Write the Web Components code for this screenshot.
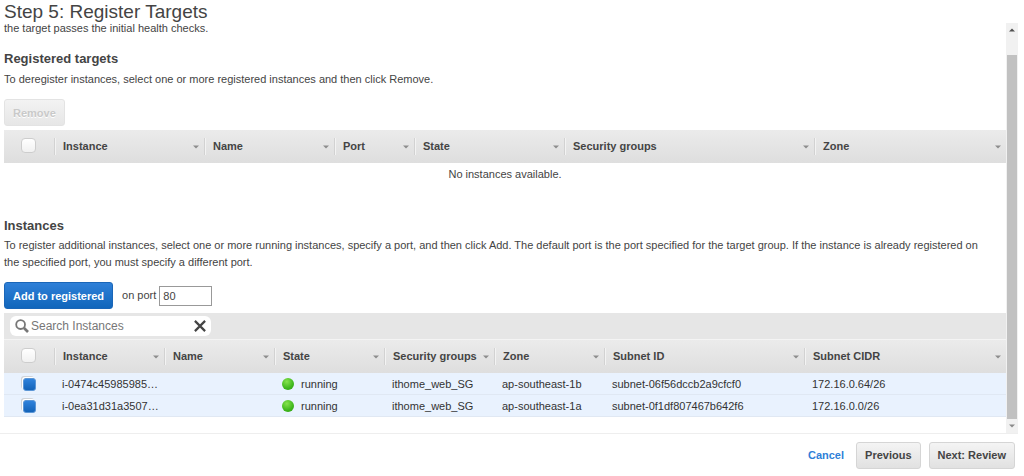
<!DOCTYPE html>
<html lang="en">
<head>
<meta charset="utf-8">
<title>Register Targets</title>
<style>
html, body { margin: 0; height: 100%; }
body { background: #fff; color: #444; font: 11px/17px "Liberation Sans", Arial, sans-serif; overflow: hidden; }
</style>
</head>
<body>
<wizard-page>
  <span slot="title">Step 5: Register Targets</span>
  <registered-targets></registered-targets>
  <available-instances></available-instances>
  <wizard-footer slot="footer"></wizard-footer>
</wizard-page>

<script>
const define = (name, html, setup) => customElements.define(name, class extends HTMLElement {
  constructor() {
    super();
    this.attachShadow({ mode: 'open' }).innerHTML = html;
  }
  connectedCallback() { if (setup) setup(this, this.shadowRoot); }
});

define('scroll-rail', `
<style>
:host { display: flex; flex-direction: column; width: 12px; flex: none; background: #f1f1f1; }
.end { height: 14px; display: flex; align-items: center; justify-content: center; }
.gap { height: 18px; }
.thumb { flex: 1; margin: 0 1px; background: #c1c1c1; }
svg { display: block; }
</style>
<div class="end"><svg width="6" height="4" viewBox="0 0 6 4"><path d="M0 3.5L3 .5l3 3z" fill="#505050"/></svg></div>
<div class="gap"></div>
<div class="thumb"></div>
<div class="end"><svg width="6" height="4" viewBox="0 0 6 4"><path d="M0 .5l3 3 3-3z" fill="#8a8a8a"/></svg></div>
`);

define('wizard-page', `
<style>
:host { display: flex; flex-direction: column; height: 100%; box-sizing: border-box; padding-right: 6px; }
h1 { margin: 0; padding: 2px 0 0 4px; font-size: 19px; line-height: 20px; font-weight: normal; color: #444; }
main { flex: 1; min-height: 0; display: flex; }
.content { flex: 1; min-width: 0; padding-left: 4px; overflow: hidden; }
p { margin: 0; line-height: 12px; }
scroll-rail { margin-top: 1px; }
</style>
<h1><slot name="title"></slot></h1>
<main>
  <div class="content">
    <p>the target passes the initial health checks.</p>
    <slot></slot>
  </div>
  <scroll-rail></scroll-rail>
</main>
<slot name="footer"></slot>
`);

define('aws-button', `
<style>
:host { display: block; flex: none; }
button { display: block; height: 27px; padding: 0 8px; border: 1px solid #d5d5d5; border-radius: 3px;
  background: linear-gradient(#f4f4f4, #e1e1e1); color: #444; font: bold 11px/24px "Liberation Sans", Arial, sans-serif; white-space: nowrap; }
:host([kind="primary"]) button { background: linear-gradient(#2f80d8, #1166bb); border-color: #1a66b8; color: #fff; }
:host([disabled]) button { color: #c9c9c9; border-color: #e3e3e3; background: linear-gradient(#f3f3f3, #e6e6e6); text-shadow: 0 1px #fff; }
</style>
<button type="button"><slot></slot></button>
`, (host, root) => { root.querySelector('button').disabled = host.hasAttribute('disabled'); });

const tableStyle = `
<style>
:host { display: block; }
table { width: 100%; table-layout: fixed; border-collapse: collapse; }
thead tr { height: 33px; background: linear-gradient(#ebebeb, #dedede); }
th, td { padding: 0; text-align: left; }
th > div { display: flex; align-items: center; justify-content: space-between; height: 17px; padding: 0 5px 0 8px;
  border-left: 1px solid #d2d2d2; box-shadow: inset 1px 0 #f3f3f3; white-space: nowrap; }
svg { display: block; flex: none; }
tbody tr { height: 22px; }
tbody tr.picked { background: #e9f2fe; color: #333; box-shadow: inset 0 -1px #e0e8f3; }
td { white-space: nowrap; padding: 0 0 0 8px; }
td:first-child { padding: 0; }
td.empty { text-align: center; }
input { appearance: none; display: block; width: 15px; height: 15px; margin: 0 auto 3px 17px; box-sizing: border-box;
  border: 1px solid #cdcdcd; border-radius: 4px; background: linear-gradient(#fff, #f1f1f1); }
td input { width: 13px; height: 13px; margin: 0 auto 0 19px; border-radius: 3px; }
td input:checked { background: linear-gradient(#2f82dc, #1363b8); border-color: #5b96d6; box-shadow: -1px -1px #fff, -2px -2px #cfd3d8; }
.state { display: flex; align-items: center; gap: 7px; }
.dot { width: 12px; height: 12px; border-radius: 50%; background: radial-gradient(circle at 40% 30%, #86e34c, #3fb71c 60%, #2b9a10); }
</style>`;
const arrow = '<svg width="6" height="4" viewBox="0 0 6 4" aria-hidden="true"><path d="M0 .5h6L3 3.5z" fill="#8d8d8d"/></svg>';

define('data-grid', tableStyle + '<table><colgroup></colgroup><thead><tr></tr></thead><tbody></tbody></table>', (host, root) => {
  const columns = host.getAttribute('columns').split(',').map(c => c.split(':'));
  const rows = (host.getAttribute('rows') || '').split(';').filter(Boolean).map(r => r.split(','));
  root.querySelector('colgroup').innerHTML = '<col style="width:50px">' +
    columns.map(([, w]) => w ? `<col style="width:${w}px">` : '<col>').join('');
  root.querySelector('thead tr').innerHTML = '<th><input type="checkbox" aria-label="Select all"></th>' +
    columns.map(([name]) => `<th scope="col"><div>${name}${arrow}</div></th>`).join('');
  root.querySelector('tbody').innerHTML = rows.length
    ? rows.map(r => `<tr class="picked"><td><input type="checkbox" checked aria-label="Select ${r[0]}"></td>` +
        r.map(v => `<td>${v === 'running' ? '<div class="state"><span class="dot"></span>running</div>' : v}</td>`).join('') + '</tr>').join('')
    : `<tr><td class="empty" colspan="${columns.length + 1}">No instances available.</td></tr>`;
});

define('registered-targets', `
<style>
:host { display: block; padding-top: 16px; }
h2 { margin: 0; font-size: 13px; line-height: 18px; color: #444; }
p { margin: 3px 0 11px; }
data-grid { margin-top: 4px; }
</style>
<h2>Registered targets</h2>
<p>To deregister instances, select one or more registered instances and then click Remove.</p>
<aws-button disabled>Remove</aws-button>
<data-grid columns="Instance:150,Name:130,Port:80,State:150,Security groups:250,Zone"></data-grid>
`);

define('search-bar', `
<style>
:host { display: block; padding: 3px 6px; background: #e6e6e6; border-bottom: 1px solid #f4f4f4; }
.box { display: flex; align-items: center; width: 201px; height: 20px; padding: 0 5px 0 5px; box-sizing: border-box; background: #fff; border-radius: 6px; }
input { flex: 1; min-width: 0; height: 18px; padding: 0 0 0 2px; border: 0; outline: 0; background: none; color: #666; font: 12px "Liberation Sans", Arial, sans-serif; }
input::placeholder { color: #777; opacity: 1; }
button { display: block; padding: 0; border: 0; background: none; }
svg { display: block; }
</style>
<div class="box">
  <svg width="14" height="14" viewBox="0 0 14 14" fill="none" stroke="#777"><circle cx="5.6" cy="5.6" r="4.4" stroke-width="1.8"/><path d="M9 9l4 4" stroke-width="2.6"/></svg>
  <input type="text" placeholder="Search Instances" aria-label="Search Instances">
  <button type="button" aria-label="Clear search"><svg width="12" height="12" viewBox="0 0 12 12"><path d="M.9.9l10.2 10.2M11.1.9L.9 11.1" stroke="#444" stroke-width="2.2"/></svg></button>
</div>
`);

define('available-instances', `
<style>
:host { display: block; padding-top: 32px; }
h2 { margin: 0; font-size: 13px; line-height: 18px; color: #444; }
p { margin: 2px 0 11px; padding-right: 16px; }
.actions { display: flex; align-items: center; margin-bottom: 4px; }
label { margin: 0 3px 0 9px; }
input { width: 53px; height: 20px; box-sizing: border-box; padding: 0 3px; border: 1px solid #999; color: #444; font: 11px "Liberation Sans", Arial, sans-serif; }
</style>
<h2>Instances</h2>
<p>To register additional instances, select one or more running instances, specify a port, and then click Add. The default port is the port specified for the target group. If the instance is already registered on the specified port, you must specify a different port.</p>
<div class="actions">
  <aws-button kind="primary">Add to registered</aws-button>
  <label for="port">on port</label><input id="port" type="text" value="80">
</div>
<search-bar></search-bar>
<data-grid columns="Instance:110,Name:110,State:110,Security groups:110,Zone:110,Subnet ID:200,Subnet CIDR"
  rows="i-0474c45985985…,,running,ithome_web_SG,ap-southeast-1b,subnet-06f56dccb2a9cfcf0,172.16.0.64/26;i-0ea31d31a3507…,,running,ithome_web_SG,ap-southeast-1a,subnet-0f1df807467b642f6,172.16.0.0/26"></data-grid>
`);

define('wizard-footer', `
<style>
:host { display: flex; align-items: center; justify-content: flex-end; gap: 8px; height: 42px; padding-right: 3px; border-top: 1px solid #eee; }
a { margin-right: 4px; color: #2f7fd8; font-weight: bold; text-decoration: none; }
</style>
<a href="#">Cancel</a>
<aws-button>Previous</aws-button>
<aws-button>Next: Review</aws-button>
`);
</script>
</body>
</html>
